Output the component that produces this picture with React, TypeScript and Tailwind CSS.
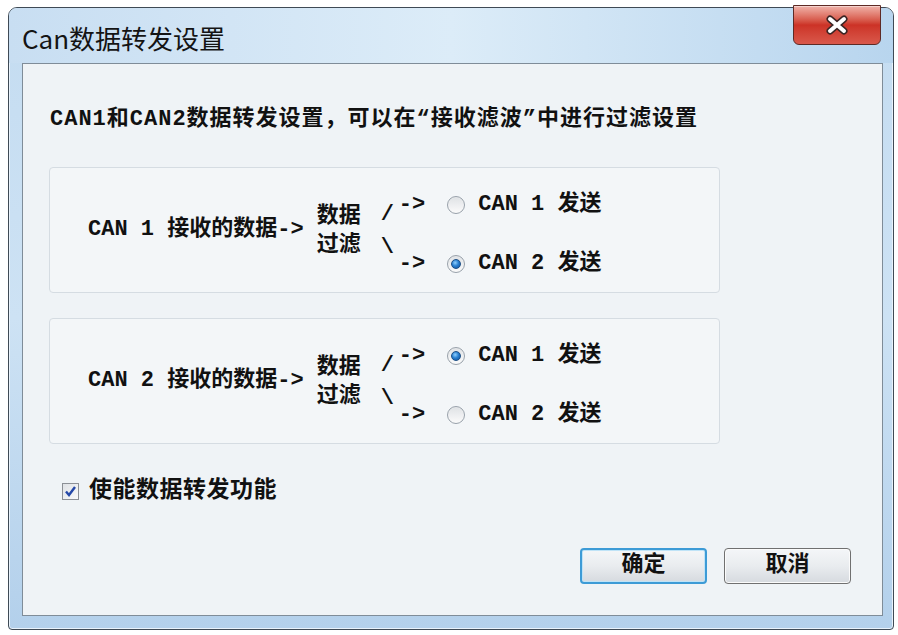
import React, { useState } from 'react';

const bodyFont = { fontFamily: '"Liberation Mono", "Noto Sans CJK SC", monospace' };

const Radio: React.FC<{ checked: boolean; onClick: () => void }> = ({ checked, onClick }) => (
  <button
    type="button"
    onClick={onClick}
    className="w-[18px] h-[18px] rounded-full border border-[#98a1aa] bg-gradient-to-b from-[#dfe2e5] to-[#fbfbfb] flex items-center justify-center shadow-[inset_0_0_1px_#ffffff]"
  >
    {checked && (
      <span className="w-[10px] h-[10px] rounded-full bg-[radial-gradient(circle_at_40%_35%,#8fd0ff_0%,#2a80d0_45%,#0f4f9a_100%)] border border-[#1c4f86]" />
    )}
  </button>
);

const RouteGroup: React.FC<{ source: number; target: number; onChange: (t: number) => void }> = ({
  source,
  target,
  onChange,
}) => (
  <div className="w-[671px] h-[126px] rounded-[4px] border border-[#d5dce2] bg-[#f3f6f8] flex items-center pl-[38px]">
    <span className="whitespace-pre text-[22px] font-bold text-[#111] leading-none">{`CAN ${source} 接收的数据->`}</span>
    <div className="ml-[13px] flex flex-col text-[22px] font-bold text-[#111] leading-[29px] mt-[2px]">
      <span>数据</span>
      <span>过滤</span>
    </div>
    <div className="ml-[20px] flex flex-col text-[22px] font-bold text-[#111] leading-[33px] mt-[1px]">
      <span>/</span>
      <span>\</span>
    </div>
    <div className="ml-[5px] flex flex-col gap-[34px] mt-[8px]">
      {[1, 2].map((n) => (
        <div key={n} className="flex items-center h-[25px]">
          <span className="text-[22px] font-bold text-[#111] leading-none">-&gt;</span>
          <span className="ml-[22px] flex">
            <Radio checked={target === n} onClick={() => onChange(n)} />
          </span>
          <span className="ml-[13px] whitespace-pre text-[22px] font-bold text-[#111] leading-none">{`CAN ${n} 发送`}</span>
        </div>
      ))}
    </div>
  </div>
);

const App: React.FC = () => {
  const [can1Target, setCan1Target] = useState(2);
  const [can2Target, setCan2Target] = useState(1);
  const [enabled, setEnabled] = useState(true);

  return (
    <div className="w-[898px] h-[635px] bg-white pt-[7px] pl-[8px] overflow-hidden" style={bodyFont}>
      {/* window frame */}
      <div className="w-[886px] h-[623px] rounded-t-[9px] rounded-b-[4px] border border-[#3f4a55] bg-gradient-to-b from-[#c4dcf1] via-[#cde2f4] to-[#b3d0eb] flex flex-col shadow-[inset_0_0_0_1px_#e8f2fb]">
        {/* title bar */}
        <div className="h-[55px] flex items-start justify-between bg-gradient-to-r from-[#c8def2] via-[#dcecf8] to-[#b8d5ee] rounded-t-[8px]">
          <span
            className="ml-[13px] mt-[15px] text-[26px] leading-[30px] text-[#141414]"
            style={{ fontFamily: '"Noto Sans CJK SC", "Noto Sans", sans-serif' }}
          >
            Can数据转发设置
          </span>
          <button
            type="button"
            className="mr-[12px] -mt-[3px] w-[88px] h-[40px] rounded-b-[6px] border border-[#5e2a25] bg-gradient-to-b from-[#eeb2aa] via-[#cc3226] to-[#d9584b] flex items-center justify-center shadow-[inset_0_1px_0_#f6d2cc]"
          >
            <svg width="26" height="20" viewBox="0 0 26 20">
              <path d="M6 4 L20 16 M20 4 L6 16" stroke="#3b2524" strokeWidth="7" strokeLinecap="round" />
              <path d="M6 4 L20 16 M20 4 L6 16" stroke="#ffffff" strokeWidth="4" strokeLinecap="round" />
            </svg>
          </button>
        </div>

        {/* client area */}
        <div className="ml-[13px] mr-[10px] h-[553px] border border-[#7f8c98] bg-[#eff3f6] flex flex-col pl-[26px] pt-[41px]">
          <p className="ml-[1px] text-[22px] font-bold text-[#111] leading-[30px] tracking-[1px] whitespace-nowrap">
            CAN1和CAN2数据转发设置，可以在“接收滤波”中进行过滤设置
          </p>

          <div className="mt-[32px]">
            <RouteGroup source={1} target={can1Target} onChange={setCan1Target} />
          </div>
          <div className="mt-[25px]">
            <RouteGroup source={2} target={can2Target} onChange={setCan2Target} />
          </div>

          <label className="mt-[35px] ml-[13px] flex items-center h-[24px] cursor-pointer">
            <span
              onClick={() => setEnabled(!enabled)}
              className="w-[17px] h-[17px] border border-[#8c9096] bg-gradient-to-br from-[#dfe2e6] to-[#fafafa] flex items-center justify-center"
            >
              {enabled && (
                <svg width="13" height="13" viewBox="0 0 13 13">
                  <path d="M2 6.5 L5 10 L11 2" fill="none" stroke="#2548a8" strokeWidth="2.4" />
                </svg>
              )}
            </span>
            <span className="ml-[10px] text-[23px] font-bold text-[#111] leading-none tracking-[0.5px]">使能数据转发功能</span>
          </label>

          <div className="mt-[45px] flex justify-end gap-[17px] pr-[31px]">
            <button
              type="button"
              className="w-[127px] h-[36px] rounded-[4px] border-2 border-[#3d9bd6] bg-gradient-to-b from-[#f4f6f8] via-[#e9ecef] to-[#d6dadf] text-[22px] font-bold text-[#111] leading-none shadow-[inset_0_0_0_1px_#bfe3f7]"
            >
              确定
            </button>
            <button
              type="button"
              className="w-[127px] h-[36px] rounded-[4px] border border-[#707070] bg-gradient-to-b from-[#f4f6f8] via-[#e9ecef] to-[#d6dadf] text-[22px] font-bold text-[#111] leading-none shadow-[inset_0_0_0_1px_#fbfbfb]"
            >
              取消
            </button>
          </div>
        </div>
      </div>
    </div>
  );
};

export default App;
